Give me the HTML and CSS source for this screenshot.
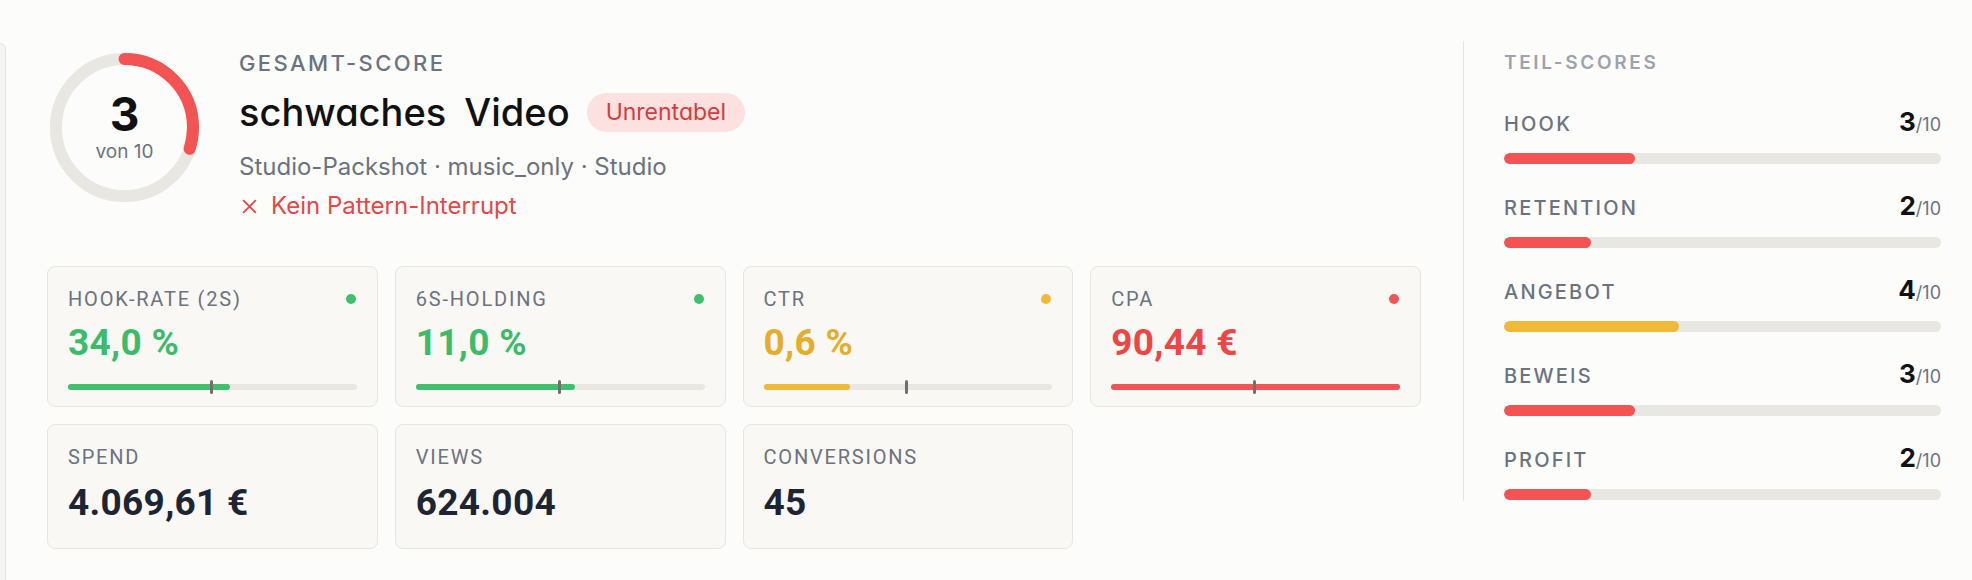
FILE: index.html
```html
<!DOCTYPE html>
<html lang="de">
<head>
<meta charset="utf-8">
<title>Score</title>
<link rel="stylesheet" href="styles.css">
</head>
<body>
<div class="stub"></div>
<main class="dashboard">
  <section class="overview">
    <header class="head">
      <div class="ring">
        <svg class="ring-svg" width="149" height="149" viewBox="0 0 149 149">
          <circle cx="74.5" cy="74.5" r="68.5" fill="none" stroke="#e9e7e2" stroke-width="12"/>
          <circle cx="74.5" cy="74.5" r="68.5" fill="none" stroke="#f45353" stroke-width="12" stroke-linecap="round" stroke-dasharray="129.1 430.4" transform="rotate(-90 74.5 74.5)"/>
        </svg>
        <div class="ring-text">
          <span class="ring-num">3</span>
          <span class="ring-sub">von 10</span>
        </div>
      </div>
      <div class="info">
        <div class="eyebrow">GESAMT-SCORE</div>
        <div class="title-row">
          <h1 class="title">schwaches Video</h1>
          <span class="badge">Unrentabel</span>
        </div>
        <div class="meta">Studio-Packshot · music_only · Studio</div>
        <div class="warn">
          <svg class="warn-icon" width="17" height="17" viewBox="0 0 16 16"><path d="M2.5 2.5 L13.5 13.5 M13.5 2.5 L2.5 13.5" stroke="#e44848" stroke-width="1.7" stroke-linecap="round" fill="none"/></svg>
          <span>Kein Pattern-Interrupt</span>
        </div>
      </div>
    </header>

    <div class="cards">
      <div class="card card-kpi">
        <div class="card-top"><span class="label">HOOK-RATE (2S)</span><span class="dot green"></span></div>
        <div class="value green-text">34,0 %</div>
        <div class="kbar"><div class="kfill green" style="width:56%"></div><span class="marker" style="left:49.5%"></span></div>
      </div>
      <div class="card card-kpi">
        <div class="card-top"><span class="label">6S-HOLDING</span><span class="dot green"></span></div>
        <div class="value green-text">11,0 %</div>
        <div class="kbar"><div class="kfill green" style="width:55%"></div><span class="marker" style="left:49.5%"></span></div>
      </div>
      <div class="card card-kpi">
        <div class="card-top"><span class="label">CTR</span><span class="dot yellow"></span></div>
        <div class="value yellow-text">0,6 %</div>
        <div class="kbar"><div class="kfill yellow" style="width:30%"></div><span class="marker" style="left:49.5%"></span></div>
      </div>
      <div class="card card-kpi">
        <div class="card-top"><span class="label">CPA</span><span class="dot red"></span></div>
        <div class="value red-text">90,44 €</div>
        <div class="kbar"><div class="kfill red" style="width:100%"></div><span class="marker" style="left:49.5%"></span></div>
      </div>
      <div class="card card-stat">
        <div class="card-top"><span class="label">SPEND</span></div>
        <div class="value navy-text">4.069,61 €</div>
      </div>
      <div class="card card-stat">
        <div class="card-top"><span class="label">VIEWS</span></div>
        <div class="value navy-text">624.004</div>
      </div>
      <div class="card card-stat">
        <div class="card-top"><span class="label">CONVERSIONS</span></div>
        <div class="value navy-text">45</div>
      </div>
    </div>
  </section>

  <aside class="subscores">
    <div class="sub-title">TEIL-SCORES</div>
    <div class="sub-list">
      <div class="sub-item">
        <div class="sub-row"><span class="sub-label">HOOK</span><span class="sub-score"><b>3</b>/10</span></div>
        <div class="sbar"><div class="sfill red" style="width:30%"></div></div>
      </div>
      <div class="sub-item">
        <div class="sub-row"><span class="sub-label">RETENTION</span><span class="sub-score"><b>2</b>/10</span></div>
        <div class="sbar"><div class="sfill red" style="width:20%"></div></div>
      </div>
      <div class="sub-item">
        <div class="sub-row"><span class="sub-label">ANGEBOT</span><span class="sub-score"><b>4</b>/10</span></div>
        <div class="sbar"><div class="sfill yellow" style="width:40%"></div></div>
      </div>
      <div class="sub-item">
        <div class="sub-row"><span class="sub-label">BEWEIS</span><span class="sub-score"><b>3</b>/10</span></div>
        <div class="sbar"><div class="sfill red" style="width:30%"></div></div>
      </div>
      <div class="sub-item">
        <div class="sub-row"><span class="sub-label">PROFIT</span><span class="sub-score"><b>2</b>/10</span></div>
        <div class="sbar"><div class="sfill red" style="width:20%"></div></div>
      </div>
    </div>
  </aside>
</main>
</body>
</html>
```
FILE: styles.css
```css
* { box-sizing: border-box; }
html, body { margin: 0; padding: 0; }
body {
  background: #fcfcfa;
  font-family: "Inter", "Noto Sans", sans-serif;
  display: flex;
  align-items: flex-start;
  width: 1972px;
  height: 580px;
  overflow: hidden;
}
.stub {
  width: 6px;
  height: 560px;
  margin-top: 43px;
  background: #f6f5f2;
  border: 1px solid #e6e4df;
  border-left: none;
  border-radius: 0 9px 0 0;
  flex: none;
}
.dashboard {
  flex: 1;
  display: flex;
  align-items: flex-start;
  gap: 42px;
  padding: 41px 31px 0 41px;
}
.overview {
  width: 1374px;
  flex: none;
  padding-top: 9px;
}
.head {
  display: flex;
  align-items: flex-start;
}
.ring {
  display: grid;
  width: 149px;
  height: 149px;
  margin: 3px 0 0 3px;
  flex: none;
}
.ring-svg, .ring-text { grid-area: 1 / 1; }
.ring-text {
  display: flex;
  flex-direction: column;
  align-items: center;
  justify-content: center;
}
.ring-num {
  font-size: 46px;
  font-weight: 700;
  line-height: 44px;
  color: #111;
  margin-bottom: 4px;
}
.ring-sub {
  font-size: 19px;
  line-height: 24px;
  color: #6b7280;
}
.info {
  margin-left: 40px;
  display: flex;
  flex-direction: column;
}
.eyebrow {
  font-size: 22px;
  line-height: 26px;
  font-weight: 500;
  letter-spacing: 0.11em;
  color: #6b7280;
}
.title-row {
  display: flex;
  align-items: center;
  gap: 17px;
  margin-top: 14px;
}
.title {
  margin: 0;
  font-size: 38px;
  line-height: 44px;
  font-weight: 500;
  color: #111;
  word-spacing: 8px;
  font-feature-settings: "cv11" 1;
}
.badge {
  height: 39px;
  line-height: 39px;
  padding: 0 19px;
  border-radius: 20px;
  background: #fde0e0;
  color: #d63b3b;
  font-size: 23px;
  font-feature-settings: "cv11" 1;
}
.meta {
  margin-top: 18px;
  font-size: 24px;
  line-height: 30px;
  color: #6b7280;
}
.warn {
  margin-top: 9px;
  display: flex;
  align-items: center;
  gap: 13px;
  font-size: 24px;
  line-height: 30px;
  color: #e44848;
  padding-left: 2px;
}
.warn-icon { flex: none; }

.cards {
  margin-top: 45px;
  display: grid;
  grid-template-columns: repeat(4, 1fr);
  gap: 17px;
}
.card {
  background: #f9f8f5;
  border: 1.5px solid #e8e6e1;
  border-radius: 8px;
  display: flex;
  flex-direction: column;
  padding: 20px 20px 16px;
}
.card-stat { padding-bottom: 25px; }
.card-top {
  display: flex;
  justify-content: space-between;
  align-items: center;
  height: 24px;
}
.label {
  font-family: "Roboto", "Liberation Sans", sans-serif;
  font-size: 20px;
  line-height: 24px;
  letter-spacing: 1.8px;
  color: #6b7280;
}
.dot {
  width: 10px;
  height: 10px;
  border-radius: 50%;
  margin-right: 1px;
}
.value {
  font-family: "Roboto", "Liberation Sans", sans-serif;
  font-weight: 700;
  font-size: 37px;
  line-height: 40px;
  letter-spacing: 0.3px;
  margin-top: 12px;
}
.card-stat .value { margin-top: 14px; }
.kbar {
  position: relative;
  margin-top: 21px;
  height: 6px;
  border-radius: 3px;
  background: #e9e7e2;
}
.kfill { height: 100%; border-radius: 3px; }
.marker {
  position: absolute;
  top: -4px;
  width: 3px;
  height: 14px;
  margin-left: -1px;
  border-radius: 1.5px;
  background: #6f6f6f;
}

.green { background: #3fc06c; }
.yellow { background: #f0b937; }
.red { background: #f45353; }
.green-text { color: #3cbc6a; }
.yellow-text { color: #e4ad2c; }
.red-text { color: #ee4545; }
.navy-text { color: #1d2533; }

.subscores {
  width: 478px;
  flex: none;
  border-left: 1.5px solid #e6e4df;
  padding: 11px 0 1px 40px;
  height: 460px;
}
.sub-title {
  font-size: 19px;
  line-height: 22px;
  font-weight: 600;
  letter-spacing: 0.14em;
  color: #9ca3af;
}
.sub-list {
  margin-top: 34px;
  display: flex;
  flex-direction: column;
  gap: 28px;
}
.sub-row {
  display: flex;
  justify-content: space-between;
  align-items: baseline;
  height: 28px;
  line-height: 28px;
}
.sub-label {
  font-size: 20px;
  font-weight: 500;
  letter-spacing: 0.11em;
  color: #6b7280;
}
.sub-score {
  font-size: 18px;
  color: #6b7280;
}
.sub-score b {
  font-size: 26px;
  font-weight: 700;
  color: #111;
}
.sbar {
  margin-top: 17px;
  height: 11px;
  border-radius: 6px;
  background: #e9e7e2;
  overflow: hidden;
}
.sfill { height: 100%; border-radius: 6px; }
```
